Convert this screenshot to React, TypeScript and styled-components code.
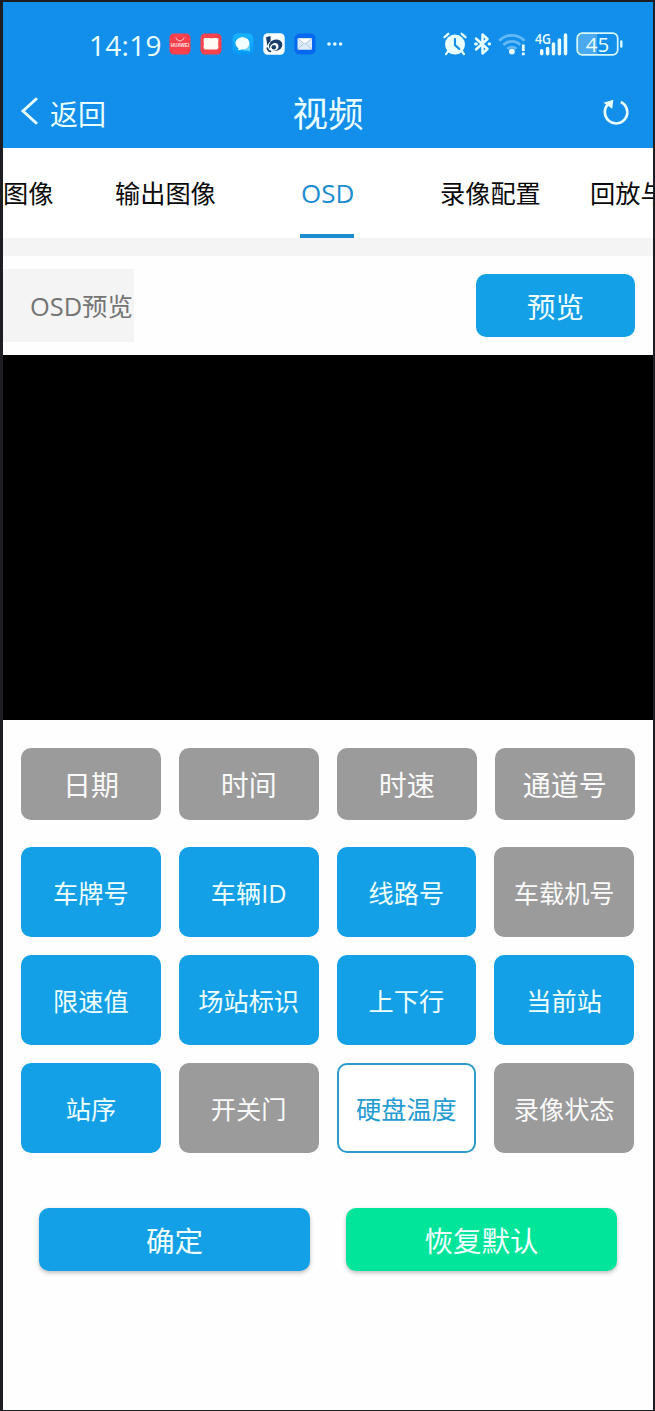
import React from "react";
import styled, { createGlobalStyle } from "styled-components";

const GlobalStyle = createGlobalStyle`
  *, *::before, *::after { box-sizing: border-box; }
  body { margin: 0; background: #1d1e22; }
  button { font: inherit; border: 0; margin: 0; padding: 0; cursor: pointer; }
`;

const Screen = styled.div`
  width: 655px;
  height: 1411px;
  display: flex;
  flex-direction: column;
  overflow: hidden;
  background: #fefefe;
  border: solid #1d1e22;
  border-width: 2px 2px 1px 3px;
  font-family: "Open Sans", "Noto Sans CJK SC", sans-serif;
  white-space: nowrap;
`;

const Header = styled.header`
  flex: none;
  height: 146px;
  background: #128eeb;
  color: #eaffff;
`;

const StatusBar = styled.div`
  height: 84px;
  padding: 0 29px 0 86px;
  display: flex;
  align-items: center;
  justify-content: space-between;
`;

const StatusGroup = styled.div<{ $gap: number }>`
  display: flex;
  align-items: center;
  gap: ${(p) => p.$gap}px;

  svg { display: block; flex: none; overflow: visible; }
`;

const Clock = styled.time`
  width: 70.5px;
  font-size: 28px;
  line-height: 40px;
  letter-spacing: 0.3px;
  padding-top: 2px;
`;

const NavBar = styled.div`
  height: 56px;
  padding: 0 23px 0 17px;
  display: grid;
  grid-template-columns: 1fr auto 1fr;
  align-items: center;
`;

const BackButton = styled.button`
  display: flex;
  align-items: center;
  gap: 11px;
  background: none;
  color: inherit;
  font-size: 28px;
  line-height: 40px;

  svg { margin-bottom: 6px; }
`;

const Title = styled.h1`
  margin: 0 0 2px 6px;
  font-size: 35.5px;
  line-height: 50px;
  font-weight: 400;
`;

const RefreshButton = styled.button`
  justify-self: end;
  display: flex;
  margin-bottom: 4px;
  background: none;
  color: inherit;
`;

const Tabs = styled.nav`
  flex: none;
  height: 90px;
  display: grid;
  grid-template-columns: 112px 185px 140px 150px 100px;
  background: #fff;
  overflow: hidden;
`;

const Tab = styled.a<{ $active?: boolean }>`
  justify-self: start;
  height: 90px;
  display: flex;
  align-items: center;
  padding: ${(p) => (p.$active ? "4px 0 0 1px" : "2px 0 4px")};
  font-size: ${(p) => (p.$active ? 26 : 25.2)}px;
  color: ${(p) => (p.$active ? "#1e8cd0" : "#0a0a0a")};
  border-bottom: ${(p) => (p.$active ? "4px solid #1e8cd0" : "0")};
`;

const Divider = styled.div`
  flex: none;
  height: 18px;
  background: #f4f4f4;
`;

const PreviewBar = styled.section`
  flex: none;
  height: 99px;
  padding-right: 18px;
  display: flex;
  align-items: center;
  justify-content: space-between;
`;

const PreviewLabel = styled.div`
  width: 131px;
  height: 73px;
  padding: 0 0 2px 27px;
  display: flex;
  align-items: center;
  background: #f4f4f4;
  color: #747474;
  font-size: 25.4px;
`;

const ActionButton = styled.button<{ $tone?: "blue" | "green"; $raised?: boolean }>`
  height: 63px;
  border-radius: 10px;
  font-size: 28.5px;
  color: #f0ffff;
  background: ${(p) => (p.$tone === "green" ? "#00e599" : "#14a0e6")};
  box-shadow: ${(p) => (p.$raised ? "0 2px 4px rgba(0, 0, 0, 0.25)" : "none")};
`;

const PreviewButton = styled(ActionButton)`
  width: 159px;
`;

const VideoArea = styled.div`
  flex: none;
  height: 365px;
  background: #000;
`;

const OptionGrid = styled.div`
  display: grid;
  grid-template-columns: repeat(4, 1fr);
  column-gap: 18px;
  row-gap: 18px;
  padding: 0 19px 0 18px;
`;

const HeadOptions = styled(OptionGrid)`
  padding-right: 18.4px;
  margin: 28px 0 27px;
`;

type OptionState = "off" | "on" | "outline";

const Option = styled.button<{ $state: OptionState; $large?: boolean }>`
  height: ${(p) => (p.$large ? 72 : 90.15)}px;
  border-radius: 10px;
  font-size: ${(p) => (p.$large ? 28 : 25.2)}px;
  color: ${(p) => (p.$state === "outline" ? "#269bd0" : p.$state === "on" ? "#f0ffff" : "#fafafa")};
  background: ${(p) => (p.$state === "outline" ? "#fff" : p.$state === "on" ? "#14a0e6" : "#9b9b9b")};
  border: ${(p) => (p.$state === "outline" ? "2px solid #2d9aca" : "0")};
`;

const Footer = styled.footer`
  display: grid;
  grid-template-columns: 1fr 1fr;
  gap: 36px;
  padding: 54.5px 36px 0;
`;

const StoreIcon = () => (
  <svg width="22" height="22" viewBox="0 0 22 22">
    <rect x=".5" y=".5" width="21" height="21" rx="4.5" fill="#f8414d" />
    <path d="M7 4.5c.5 4.5 7.5 4.5 8 0" fill="none" stroke="#ffd5d5" strokeWidth="1" />
    <text x="11" y="13.7" fontSize="4.6" fontWeight="700" fontFamily="Liberation Sans, sans-serif" textAnchor="middle" fill="#ffe9e9">HUAWEI</text>
  </svg>
);

const ReaderIcon = () => (
  <svg width="22" height="22" viewBox="0 0 22 22">
    <rect x=".5" y=".5" width="21" height="21" rx="4.5" fill="#f8434f" />
    <path d="M3.500 6 5 5h4.500l1.500.6 1.500-.6H17l1.500 1-.4 4.500.4 4.500-1.500 1.500H5L3.500 15l.4-4.500z" fill="#fffaf2" />
  </svg>
);

const ChatIcon = () => (
  <svg width="22" height="22" viewBox="0 0 22 22">
    <defs>
      <linearGradient id="chat" x1="0" y1="0" x2="0" y2="1">
        <stop offset="0" stopColor="#18b4ff" />
        <stop offset="1" stopColor="#079af8" />
      </linearGradient>
    </defs>
    <rect x=".5" y=".5" width="21" height="21" rx="5" fill="url(#chat)" />
    <path d="M12 15.500c3 0 5.500-1.500 6-4v5.500l-.8 1.500-2.500-1H11z" fill="#64d4ff" />
    <path d="M10.500 4.200c4 0 7 2.700 7 6.100s-3 6.200-7 6.200l-4.500.7.500-2C4.500 14 3.500 12.200 3.500 10.300c0-3.400 3-6.100 7-6.100z" fill="#f3ffff" />
  </svg>
);

const BankIcon = () => (
  <svg width="22" height="22" viewBox="0 0 22 22">
    <rect x=".3" y=".3" width="21.400" height="21.400" rx="4.500" fill="#fcffff" />
    <path d="M3 4.200 7.600 3v5.200C5.800 9.500 4.700 11 4.400 13z" fill="#173d68" />
    <path d="M9 7.800c5-2.800 10.400-.4 10.300 4 0 4.500-5 7-9.300 6 3.500-.1 5.700-2.200 5.500-4.900-.2-2.500-2.800-3.600-5.400-2.500-2.300 1-3.500 3.200-3.100 5.600-1.700-2.500-1-6.200 2-8.200z" fill="#173d68" />
    <circle cx="10.800" cy="14.200" r="2.300" fill="#173d68" />
    <path d="M4 14.500c.4 2.200 2 3.700 4.200 4.100" fill="none" stroke="#173d68" strokeWidth="1.500" />
  </svg>
);

const MailIcon = () => (
  <svg width="22" height="22" viewBox="0 0 22 22">
    <rect x=".5" y=".5" width="21" height="21" rx="5" fill="#0568ef" />
    <rect x="3.500" y="5.200" width="14.500" height="11.500" rx="1" fill="#dcebf5" />
    <path d="m4 5.500 6.800 5.500L17.500 5.500z" fill="#fff" />
    <path d="m4 5.700 5.500 4.600q1.300 1 2.600 0L17.500 5.700M4 16l5-5m8.500 5-5-5" fill="none" stroke="#9eb9cf" strokeWidth=".8" />
  </svg>
);

const MoreIcon = () => (
  <svg width="22" height="22" viewBox="0 0 22 22" fill="#e2fbff">
    <circle cx="3" cy="11" r="1.800" />
    <circle cx="8.800" cy="11" r="1.800" />
    <circle cx="14.600" cy="11" r="1.800" />
  </svg>
);

const AlarmIcon = () => (
  <svg width="24" height="24" viewBox="0 0 24 24" fill="none" stroke="#eaffff" strokeLinecap="round">
    <circle cx="12" cy="12.600" r="10" fill="#eaffff" stroke="none" />
    <path d="M1.500 5.200 5.300 1.800M22.500 5.200l-3.800-3.400" strokeWidth="2.300" />
    <path d="m5 19.500-2 2.700m16-2.700 2 2.700" strokeWidth="2.200" />
    <path d="M12 7v6l4.200 3.900" stroke="#128eeb" strokeWidth="2.200" />
  </svg>
);

const BluetoothIcon = () => (
  <svg width="17" height="24" viewBox="0 0 17 24" fill="none" stroke="#eaffff" strokeWidth="2.500" strokeLinecap="round" strokeLinejoin="round">
    <path d="m2 6.500 11.500 10.500L8.500 21.500V2.500l5 4.500L2 17.500" />
    <path d="M1.500 12h1m12.500 0h.7" strokeWidth="2.800" />
  </svg>
);

const WifiIcon = () => (
  <svg width="29" height="24" viewBox="0 0 29 24" fill="none" strokeWidth="2.800">
    <path d="M1.200 8.700c7.200-7.200 18.200-7.200 25.400 0M5.300 13c4.900-4.900 12.300-4.900 17.200 0M9.300 16.900c2.700-2.400 6.500-2.400 9.200 0" stroke="#62b9f5" />
    <path d="M22.300 12.300h5.700V23h-5.700z" fill="#128eeb" />
    <circle cx="13.900" cy="19.600" r="2.900" fill="#eaffff" />
    <path d="M25.300 12.500v6.500m0 1.500v2.700" stroke="#eaffff" strokeWidth="2.800" />
  </svg>
);

const SignalIcon = () => (
  <svg width="34" height="24" viewBox="0 0 34 24">
    <text x="0" y="11.500" fontSize="15" fontWeight="600" fontFamily="Open Sans, sans-serif" textLength="16" lengthAdjust="spacingAndGlyphs" fill="#eaffff">4G</text>
    <path d="M6.700 18.800v2.900M12.600 16.500v5.200M18.500 12v9.700M24.400 8v13.700M30.500 3v18.700" stroke="#eaffff" strokeWidth="3.500" strokeLinecap="round" />
  </svg>
);

const BatteryIcon = () => (
  <svg width="48" height="24" viewBox="0 0 48 24">
    <path d="M7 1h14v22H7a5 5 0 0 1-5-5V6a5 5 0 0 1 5-5z" fill="#4ba9f0" />
    <rect x="1.200" y="1.200" width="40.500" height="21.700" rx="5" fill="none" stroke="#d6f8ff" strokeWidth="1.700" />
    <path d="M45.300 9.500v5" stroke="#d6f8ff" strokeWidth="2.500" strokeLinecap="round" />
    <text x="21.500" y="19.500" fontSize="20.500" fontFamily="Open Sans, sans-serif" textAnchor="middle" fill="#eaffff">45</text>
  </svg>
);

const BackIcon = () => (
  <svg width="19" height="28" viewBox="0 0 19 28" fill="none" stroke="#eaffff" strokeWidth="2.900">
    <path d="M17 1.200 3 14l14 12.800" />
  </svg>
);

const RefreshIcon = () => (
  <svg width="28" height="28" viewBox="0 0 28 28" fill="none" stroke="#eaffff" strokeWidth="2.700">
    <path d="M18.800 4A11.200 11.200 0 1 1 6.600 5.800" />
    <path d="M1.500 4.800 11.300 1.800 10.300 10.800z" fill="#eaffff" stroke="none" />
  </svg>
);

const headOptions = ["日期", "时间", "时速", "通道号"];

const options: { label: string; state: OptionState }[] = [
  { label: "车牌号", state: "on" },
  { label: "车辆ID", state: "on" },
  { label: "线路号", state: "on" },
  { label: "车载机号", state: "off" },
  { label: "限速值", state: "on" },
  { label: "场站标识", state: "on" },
  { label: "上下行", state: "on" },
  { label: "当前站", state: "on" },
  { label: "站序", state: "on" },
  { label: "开关门", state: "off" },
  { label: "硬盘温度", state: "outline" },
  { label: "录像状态", state: "off" },
];

export default function App() {
  return (
    <>
      <GlobalStyle />
      <Screen lang="zh-CN">
        <Header>
          <StatusBar>
            <StatusGroup $gap={9.4}>
              <Clock>14:19</Clock>
              <StoreIcon />
              <ReaderIcon />
              <ChatIcon />
              <BankIcon />
              <MailIcon />
              <MoreIcon />
            </StatusGroup>
            <StatusGroup $gap={7.3}>
              <AlarmIcon />
              <BluetoothIcon />
              <WifiIcon />
              <SignalIcon />
              <BatteryIcon />
            </StatusGroup>
          </StatusBar>
          <NavBar>
            <BackButton>
              <BackIcon />
              返回
            </BackButton>
            <Title>视频</Title>
            <RefreshButton aria-label="刷新">
              <RefreshIcon />
            </RefreshButton>
          </NavBar>
        </Header>
        <Tabs>
          <Tab>图像</Tab>
          <Tab>输出图像</Tab>
          <Tab $active>OSD</Tab>
          <Tab>录像配置</Tab>
          <Tab>回放与</Tab>
        </Tabs>
        <Divider />
        <PreviewBar>
          <PreviewLabel>OSD预览</PreviewLabel>
          <PreviewButton>预览</PreviewButton>
        </PreviewBar>
        <VideoArea />
        <HeadOptions>
          {headOptions.map((label) => (
            <Option key={label} $state="off" $large>{label}</Option>
          ))}
        </HeadOptions>
        <OptionGrid>
          {options.map(({ label, state }) => (
            <Option key={label} $state={state}>{label}</Option>
          ))}
        </OptionGrid>
        <Footer>
          <ActionButton $raised>确定</ActionButton>
          <ActionButton $tone="green" $raised>恢复默认</ActionButton>
        </Footer>
      </Screen>
    </>
  );
}
